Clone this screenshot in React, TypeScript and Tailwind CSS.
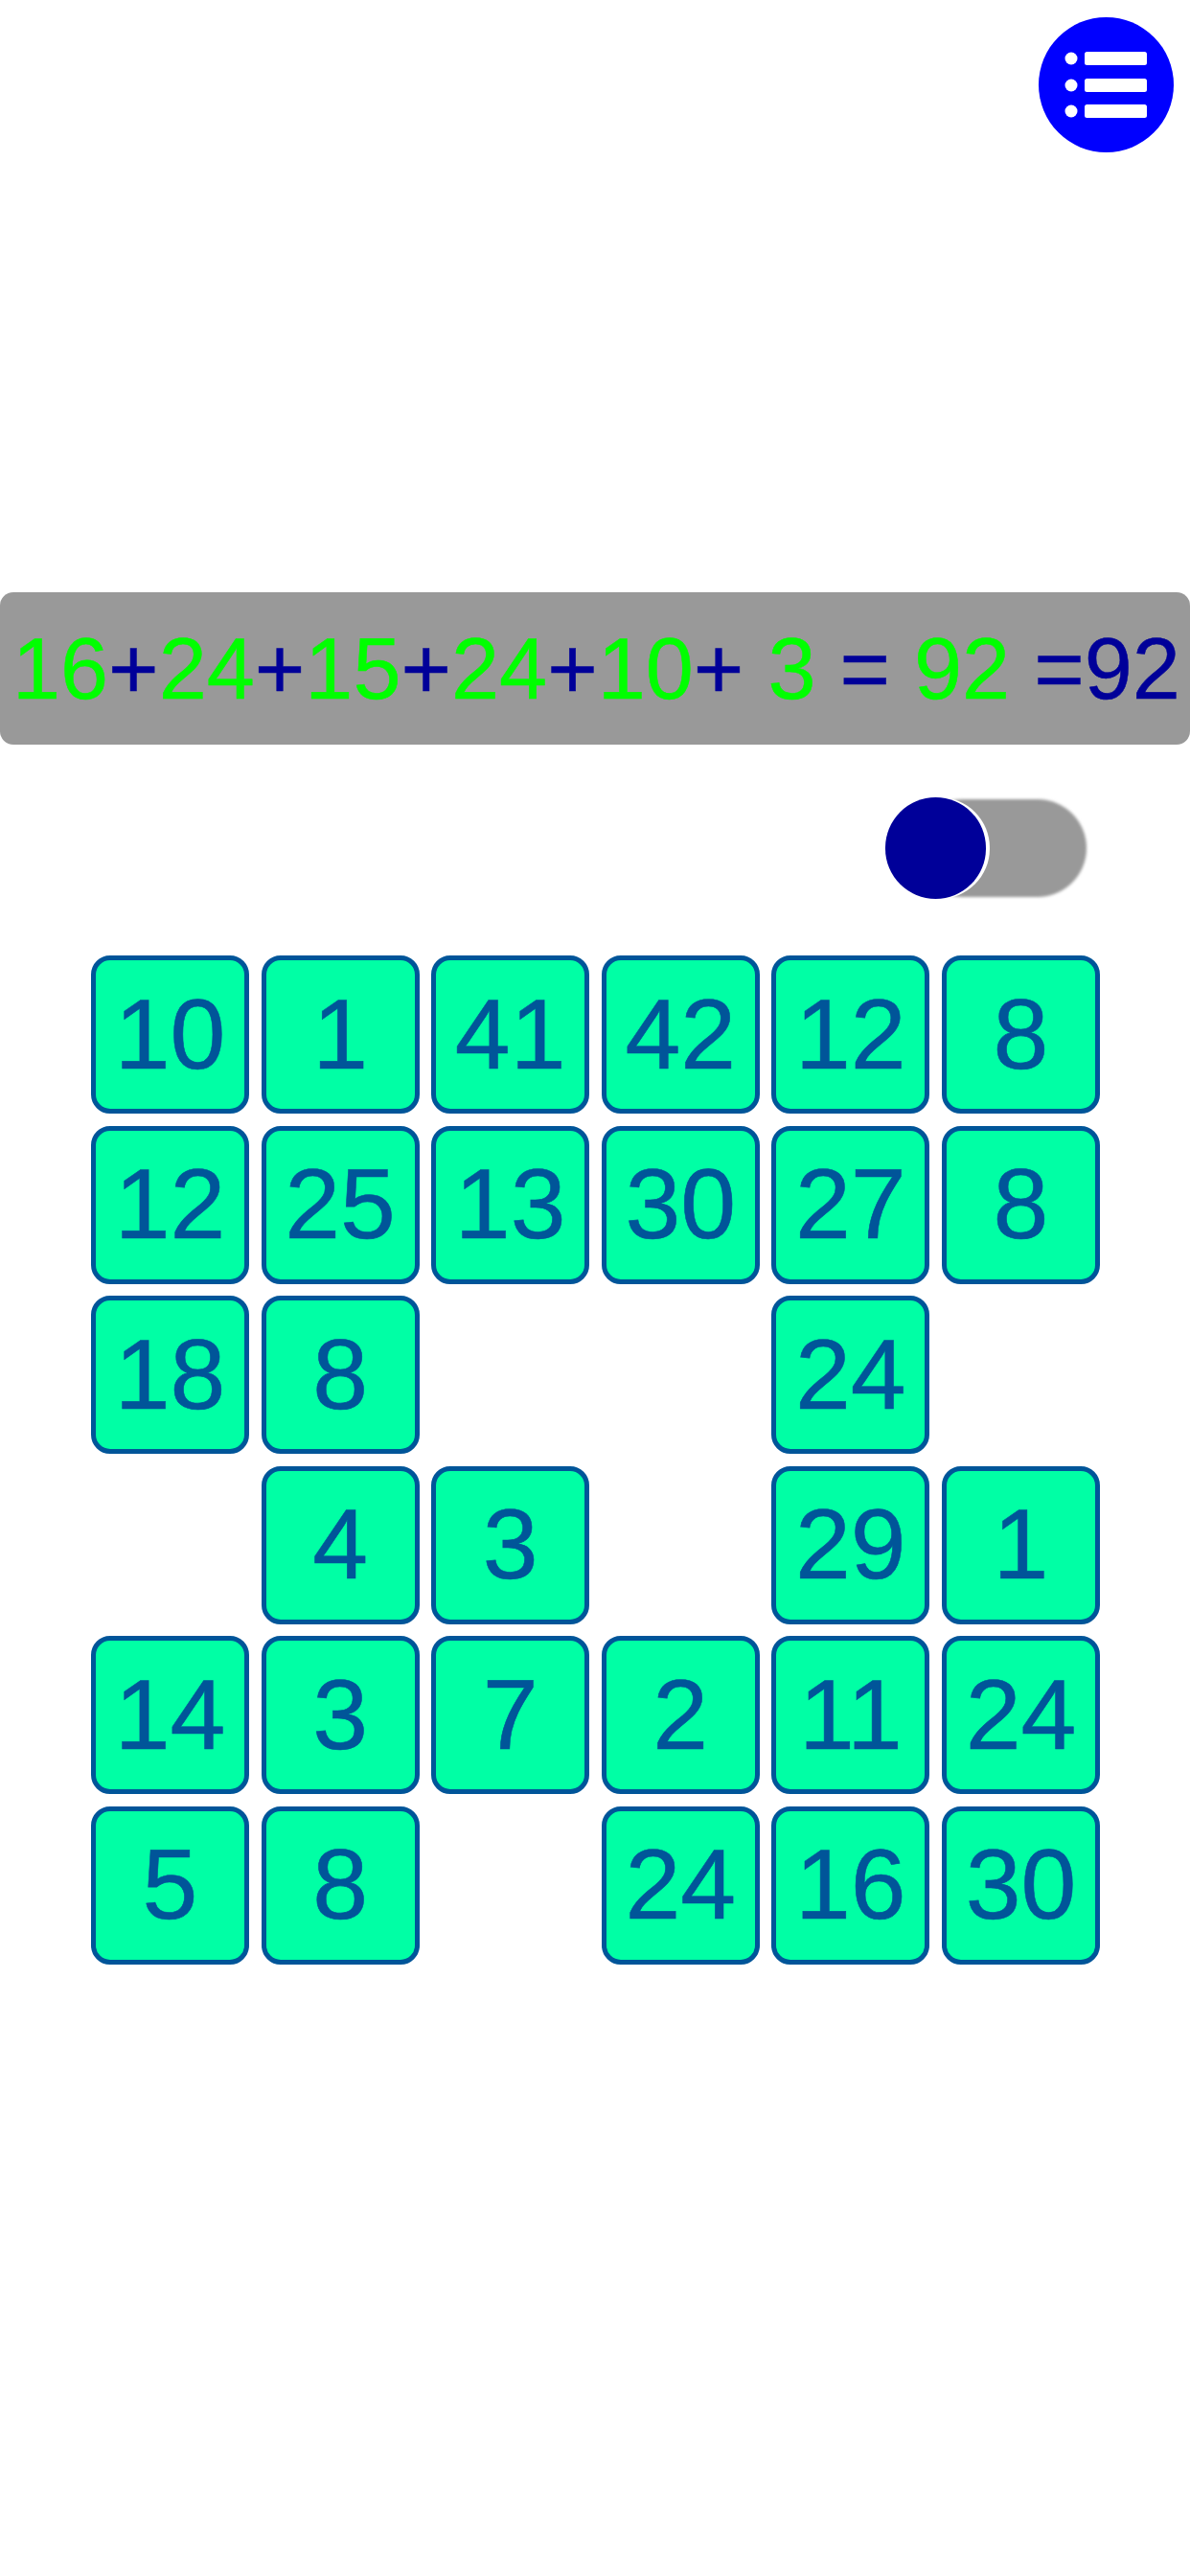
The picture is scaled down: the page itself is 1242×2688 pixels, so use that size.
const rows: (number | null)[][] = [
  [10, 1, 41, 42, 12, 8],
  [12, 25, 13, 30, 27, 8],
  [18, 8, null, null, 24, null],
  [null, 4, 3, null, 29, 1],
  [14, 3, 7, 2, 11, 24],
  [5, 8, null, 24, 16, 30],
];

function MenuButton() {
  return (
    <button className="flex h-[141px] w-[141px] items-center justify-center rounded-full bg-[#0000ff]">
      <svg width="141" height="141" viewBox="0 0 141 141" fill="#fff">
        <circle cx="34" cy="43" r="6.5" />
        <circle cx="34" cy="71" r="6.5" />
        <circle cx="34" cy="98" r="6.5" />
        <rect x="48" y="36" width="65" height="14" rx="2.5" />
        <rect x="48" y="64" width="65" height="14" rx="2.5" />
        <rect x="48" y="91" width="65" height="14" rx="2.5" />
      </svg>
    </button>
  );
}

function Toggle() {
  return (
    <div className="relative h-[106px] w-[210px]">
      <div className="absolute top-[2px] right-0 h-[102px] w-[180px] rounded-full bg-[#999999] blur-[1.5px]" />
      <div className="absolute top-0 left-0 h-[106px] w-[105px] rounded-full bg-[#000099] shadow-[4px_0_0_0_#fff] blur-[0.5px]" />
    </div>
  );
}

export default function App() {
  return (
    <div className="flex h-[2688px] flex-col bg-white font-['Liberation_Sans',Arial,sans-serif]">
      {/* Menu */}
      <div className="flex justify-end pt-[18px] pr-[17px]">
        <MenuButton />
      </div>

      {/* Sum bar */}
      <div className="mt-[459px] flex h-[159px] items-center rounded-[14px] bg-[#999999] pl-[13px]">
        <div className="text-[90px] leading-none whitespace-pre text-[#000099] [-webkit-text-stroke:0.5px]">
          <span className="text-[#00ff00]">16</span>+
          <span className="text-[#00ff00]">24</span>+
          <span className="text-[#00ff00]">15</span>+
          <span className="text-[#00ff00]">24</span>+
          <span className="text-[#00ff00]">10</span>+{' '}
          <span className="text-[#00ff00]">3</span> ={' '}
          <span className="text-[#00ff00]">92</span> =92
        </div>
      </div>

      {/* Toggle */}
      <div className="mt-[55px] flex justify-end pr-[108px]">
        <Toggle />
      </div>

      {/* Number tiles */}
      <div className="mt-[59px] ml-[95px] grid w-fit grid-cols-[repeat(6,165px)] gap-[12.6px]">
        {rows.flat().map((n, i) =>
          n === null ? (
            <div key={i} className="h-[165px]" />
          ) : (
            <div
              key={i}
              className="flex h-[165px] items-center justify-center rounded-[20px] border-[5px] border-[#005599] bg-[#00ffa5] pb-[2px] text-[104px] leading-none text-[#005599] [-webkit-text-stroke:0.6px]"
            >
              {n}
            </div>
          ),
        )}
      </div>
    </div>
  );
}
